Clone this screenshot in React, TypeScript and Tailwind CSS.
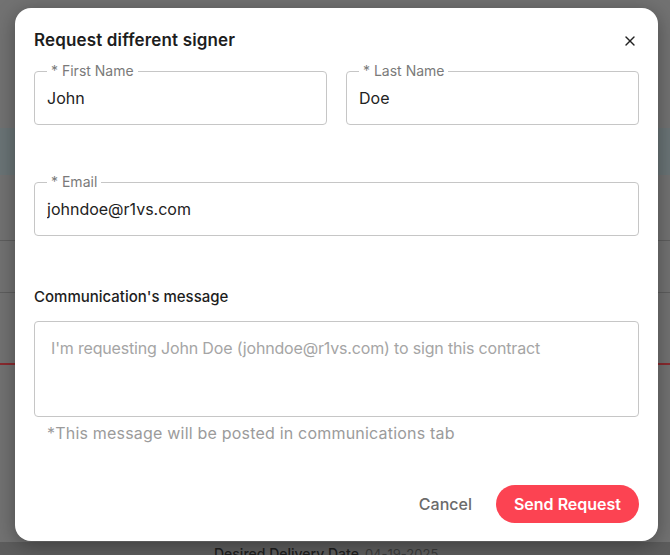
import React, { useState } from 'react';
import { X } from 'lucide-react';

const font = { fontFamily: 'Inter, "Noto Sans", sans-serif' };

interface OutlinedFieldProps {
    label: string;
    value: string;
    onChange: (v: string) => void;
}

const OutlinedField: React.FC<OutlinedFieldProps> = ({ label, value, onChange }) => (
    <fieldset className="relative h-[63px] rounded-[4px] border border-[#c6c6c6] px-[12px] -mt-[9px]">
        <legend className="px-[4px] text-[14px] leading-[18px] text-[#7a7a7a]">{label}</legend>
        <input
            type="text"
            value={value}
            onChange={(e) => onChange(e.target.value)}
            className="w-full bg-transparent text-[16px] leading-[22px] text-[#222] outline-none mt-[7px]"
        />
    </fieldset>
);

export default function App() {
    const [firstName, setFirstName] = useState('John');
    const [lastName, setLastName] = useState('Doe');
    const [email, setEmail] = useState('johndoe@r1vs.com');
    const [message, setMessage] = useState('');

    return (
        <div className="relative h-[555px] w-[670px] overflow-hidden bg-[#727272]" style={font}>
            {/* page behind the overlay */}
            <div className="flex flex-col">
                <div className="h-[128px]" />
                <div className="h-[47px] bg-[#6a7476]" />
                <div className="h-[65px]" />
                <div className="h-px bg-[#5e5e5e]" />
                <div className="h-[51px]" />
                <div className="h-px bg-[#5e5e5e]" />
                <div className="h-[70px]" />
                <div className="h-[2px] bg-[#8a2a2f]" />
                <div className="h-[177px]" />
                <div className="flex items-baseline gap-[6px] pl-[214px] bg-[#5d5d5d] h-[21px] pt-[1px]">
                    <span className="text-[14px] font-medium text-[#1e1e1e]">Desired Delivery Date</span>
                    <span className="text-[13px] text-[#3a3a3a]">04-19-2025</span>
                </div>
            </div>

            {/* modal */}
            <div className="absolute left-[15px] top-[8px] w-[643px] h-[533px] rounded-[16px] bg-white shadow-[0_4px_20px_rgba(0,0,0,0.35)] flex flex-col px-[19px] pt-[22px]">
                <div className="flex items-center justify-between h-[22px]">
                    <h2 className="text-[17px] font-semibold text-[#1d1d1d] tracking-[0.15px]">Request different signer</h2>
                    <button className="text-[#222] mr-[1px]">
                        <X className="w-[16px] h-[16px]" strokeWidth={2} />
                    </button>
                </div>

                <div className="grid grid-cols-2 gap-[19px] mt-[19px]">
                    <OutlinedField label="* First Name" value={firstName} onChange={setFirstName} />
                    <OutlinedField label="* Last Name" value={lastName} onChange={setLastName} />
                </div>

                <div className="mt-[57px]">
                    <OutlinedField label="* Email" value={email} onChange={setEmail} />
                </div>

                <h3 className="mt-[51px] text-[15px] font-medium text-[#1d1d1d] leading-[20px]">Communication's message</h3>

                <textarea
                    value={message}
                    onChange={(e) => setMessage(e.target.value)}
                    placeholder="I'm requesting John Doe (johndoe@r1vs.com) to sign this contract"
                    className="mt-[14px] h-[96px] w-full resize-none rounded-[4px] border border-[#c6c6c6] px-[16px] pt-[15px] text-[16px] leading-[22px] tracking-[-0.17px] text-[#222] outline-none placeholder:text-[#a5a5a5]"
                />
                <p className="mt-[5px] pl-[13px] text-[16px] leading-[22px] tracking-[0.2px] text-[#9b9b9b]">*This message will be posted in communications tab</p>

                <div className="mt-[41px] flex items-center justify-end gap-[24px]">
                    <button className="text-[16px] font-medium text-[#6b6b6b]">Cancel</button>
                    <button className="h-[38px] rounded-full bg-[#fc4352] px-[18px] text-[16px] font-semibold text-white">Send Request</button>
                </div>
            </div>
        </div>
    );
}
